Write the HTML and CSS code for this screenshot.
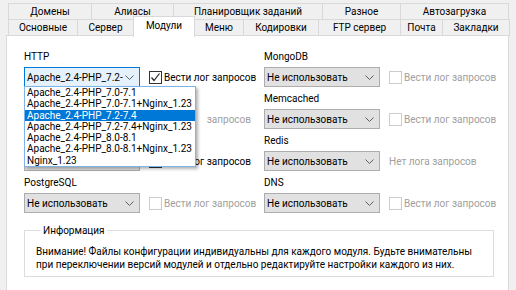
FILE: index.html
```html
<!DOCTYPE html>
<html lang="ru">
<head>
<meta charset="utf-8">
<title>Модули</title>
<link rel="stylesheet" href="styles.css">
</head>
<body>
<div class="window">
  <div class="tabs">
    <div class="tab-row">
      <div class="tab w83">Домены</div>
      <div class="tab w82">Алиасы</div>
      <div class="tab w149">Планировщик заданий</div>
      <div class="tab w78">Разное</div>
      <div class="tab w109">Автозагрузка</div>
    </div>
    <div class="tab-row second">
      <div class="tab w69">Основные</div>
      <div class="tab w56">Сервер</div>
      <div class="tab w61 active">Модули</div>
      <div class="tab w50">Меню</div>
      <div class="tab w75">Кодировки</div>
      <div class="tab w82">FTP сервер</div>
      <div class="tab w42">Почта</div>
      <div class="tab w68">Закладки</div>
    </div>
  </div>
  <div class="panel">
    <div class="grid">
      <div class="col">
        <div class="field">
          <div class="label">HTTP</div>
          <div class="ctrl-row">
            <div class="select focused"><span class="val">Apache_2.4-PHP_7.2-</span><svg class="chev" width="9" height="5" viewBox="0 0 9 5"><polyline points="0.5,0.5 4.5,4.5 8.5,0.5"/></svg></div>
            <div class="check"><span class="box checked"><svg width="11" height="11" viewBox="0 0 11 11"><polyline points="1.5,5.5 4,8.5 9.5,1.5"/></svg></span><span>Вести лог запросов</span></div>
          </div>
        </div>
        <div class="field">
          <div class="label"></div>
          <div class="ctrl-row">
            <div class="select"><span class="val"></span></div>
            <div class="check disabled"><span class="box"></span><span class="tail">запросов</span></div>
          </div>
        </div>
        <div class="field">
          <div class="label"></div>
          <div class="ctrl-row">
            <div class="select"><span class="val"></span></div>
            <div class="check"><span class="box"></span><span class="tail">лог запросов</span></div>
          </div>
        </div>
        <div class="field">
          <div class="label">PostgreSQL</div>
          <div class="ctrl-row">
            <div class="select"><span class="val">Не использовать</span><svg class="chev" width="9" height="5" viewBox="0 0 9 5"><polyline points="0.5,0.5 4.5,4.5 8.5,0.5"/></svg></div>
            <div class="check disabled"><span class="box"></span><span>Вести лог запросов</span></div>
          </div>
        </div>
      </div>
      <div class="col">
        <div class="field">
          <div class="label">MongoDB</div>
          <div class="ctrl-row">
            <div class="select"><span class="val">Не использовать</span><svg class="chev" width="9" height="5" viewBox="0 0 9 5"><polyline points="0.5,0.5 4.5,4.5 8.5,0.5"/></svg></div>
            <div class="check disabled"><span class="box"></span><span>Вести лог запросов</span></div>
          </div>
        </div>
        <div class="field">
          <div class="label">Memcached</div>
          <div class="ctrl-row">
            <div class="select"><span class="val">Не использовать</span><svg class="chev" width="9" height="5" viewBox="0 0 9 5"><polyline points="0.5,0.5 4.5,4.5 8.5,0.5"/></svg></div>
            <div class="check disabled"><span class="box"></span><span>Вести лог запросов</span></div>
          </div>
        </div>
        <div class="field">
          <div class="label">Redis</div>
          <div class="ctrl-row">
            <div class="select"><span class="val">Не использовать</span><svg class="chev" width="9" height="5" viewBox="0 0 9 5"><polyline points="0.5,0.5 4.5,4.5 8.5,0.5"/></svg></div>
            <div class="nolog">Нет лога запросов</div>
          </div>
        </div>
        <div class="field">
          <div class="label">DNS</div>
          <div class="ctrl-row">
            <div class="select"><span class="val">Не использовать</span><svg class="chev" width="9" height="5" viewBox="0 0 9 5"><polyline points="0.5,0.5 4.5,4.5 8.5,0.5"/></svg></div>
            <div class="check disabled"><span class="box"></span><span>Вести лог запросов</span></div>
          </div>
        </div>
      </div>
    </div>
    <fieldset class="info">
      <legend>Информация</legend>
      <p>Внимание! Файлы конфигурации индивидуальны для каждого модуля. Будьте внимательны<br>при переключении версий модулей и отдельно редактируйте настройки каждого из них.</p>
    </fieldset>
    <ul class="dropdown">
      <li>Apache_2.4-PHP_7.0-7.1</li>
      <li>Apache_2.4-PHP_7.0-7.1+Nginx_1.23</li>
      <li class="sel">Apache_2.4-PHP_7.2-7.4</li>
      <li>Apache_2.4-PHP_7.2-7.4+Nginx_1.23</li>
      <li>Apache_2.4-PHP_8.0-8.1</li>
      <li>Apache_2.4-PHP_8.0-8.1+Nginx_1.23</li>
      <li>Nginx_1.23</li>
    </ul>
  </div>
</div>
</body>
</html>
```
FILE: styles.css
```css
* { box-sizing: border-box; }
html, body { margin: 0; }
body {
  width: 516px;
  height: 290px;
  overflow: hidden;
  background: #f0f0f0;
  color: #000;
  font-family: Roboto, "Liberation Sans", sans-serif;
  font-size: 10px;
}
.window { padding: 3px 7px 0 6px; }
.tabs { margin-left: 2px; }
.tab-row { display: flex; height: 17px; }
.tab-row.second { margin-top: -1px; }
.tab {
  height: 17px;
  border: 1px solid #d9d9d9;
  margin-right: -1px;
  background: #f0f0f0;
  text-align: center;
  line-height: 15px;
  white-space: nowrap;
}
.tab.active {
  position: relative;
  z-index: 2;
  background: #fff;
  height: 21px;
  margin-top: -3px;
  border-bottom: none;
  line-height: 17px;
}
.w42 { width: 43px; }
.w50 { width: 50px; }
.w56 { width: 57px; }
.w61 { width: 62px; }
.w68 { width: 68px; }
.w69 { width: 70px; }
.w75 { width: 76px; }
.w78 { width: 79px; }
.w82 { width: 83px; }
.w83 { width: 84px; }
.w109 { width: 109px; }
.w149 { width: 150px; }

.panel {
  position: relative;
  margin-top: -1px;
  height: 260px;
  background: #fff;
  border: 1px solid #d9d9d9;
  padding: 14px 0 0 17px;
}
.grid { display: grid; grid-template-columns: 240px 240px; }
.field { height: 42px; }
.label { line-height: 14px; height: 14px; white-space: nowrap; }
.ctrl-row { display: flex; align-items: center; margin-top: 3px; gap: 9px; }
.select {
  width: 116px;
  height: 20px;
  border: 1px solid #adadad;
  background: #e1e1e1;
  display: flex;
  align-items: center;
  justify-content: space-between;
  padding: 0 5px 0 2px;
  white-space: nowrap;
  overflow: hidden;
}
.select.focused { border-color: #0078d7; background: #e5f1fb; }
.chev { flex: none; }
.chev polyline { fill: none; stroke: #606060; stroke-width: 1; }
.check { display: flex; align-items: center; gap: 2px; white-space: nowrap; }
.tail { width: 87px; text-align: right; }
.box {
  width: 13px;
  height: 13px;
  border: 1px solid #333;
  background: #fff;
  display: flex;
  align-items: center;
  justify-content: center;
}
.box svg polyline { fill: none; stroke: #222; stroke-width: 1.2; }
.check.disabled { color: #a0a0a0; }
.check.disabled .box { border-color: #cccccc; }
.nolog { color: #a0a0a0; white-space: nowrap; }

.info {
  margin: 6px 0 0 0;
  width: 470px;
  min-width: 0;
  border: 1px solid #dcdcdc;
  padding: 8px 10px 5px 11px;
}
.info legend { padding: 0 2px; margin-left: 5px; line-height: 13px; color: #000; }
.info p { margin: 0; line-height: 13px; white-space: nowrap; }

.dropdown {
  position: absolute;
  left: 17px;
  top: 50px;
  width: 172px;
  height: 81px;
  margin: 0;
  padding: 0;
  list-style: none;
  background: #fff;
  border: 1px solid #7eb4ea;
  box-shadow: 2px 2px 3px rgba(0,0,0,0.3);
  z-index: 5;
}
.dropdown li {
  height: 11.3px;
  line-height: 11.3px;
  padding-left: 2px;
  white-space: nowrap;
}
.dropdown li.sel { background: #0078d7; color: #fff; }
```
